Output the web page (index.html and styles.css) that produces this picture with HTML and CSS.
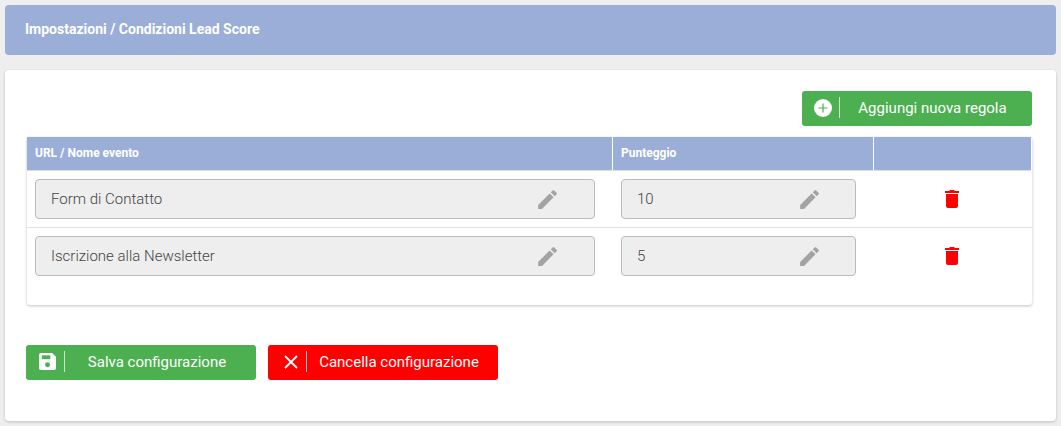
FILE: index.html
```html
<!DOCTYPE html>
<html lang="it">
<head>
  <meta charset="UTF-8" />
  <title>Condizioni Lead Score</title>
  <link rel="stylesheet" href="styles.css">
</head>
<body>

  <div class="page-title">Impostazioni / Condizioni Lead Score</div>

  <div class="card">
    <div class="toolbar">
      <button class="btn btn-green btn-add">
        <span class="btn-icon">
          <svg width="18" height="18" viewBox="0 0 18 18"><circle cx="9" cy="9" r="9" fill="#fff"/><path d="M9 4.5v9M4.5 9h9" stroke="#4caf50" stroke-width="1.2"/></svg>
        </span>
        <span class="btn-label">Aggiungi nuova regola</span>
      </button>
    </div>

    <div class="table-box">
      <div class="row row-head">
        <div class="col-name">URL / Nome evento</div>
        <div class="col-score">Punteggio</div>
        <div class="col-action"></div>
      </div>

      <div class="row">
        <div class="col-name">
          <div class="field">
            <span>Form di Contatto</span>
            <svg class="pencil" viewBox="0 0 24 24"><path d="M3 17.25V21h3.75L17.81 9.94l-3.75-3.75L3 17.25zM20.71 7.04a1 1 0 0 0 0-1.41l-2.34-2.34a1 1 0 0 0-1.41 0l-1.83 1.83 3.75 3.75 1.83-1.83z"/></svg>
          </div>
        </div>
        <div class="col-score">
          <div class="field">
            <span>10</span>
            <svg class="pencil" viewBox="0 0 24 24"><path d="M3 17.25V21h3.75L17.81 9.94l-3.75-3.75L3 17.25zM20.71 7.04a1 1 0 0 0 0-1.41l-2.34-2.34a1 1 0 0 0-1.41 0l-1.83 1.83 3.75 3.75 1.83-1.83z"/></svg>
          </div>
        </div>
        <div class="col-action">
          <svg width="14" height="18" viewBox="0 0 14 18"><path d="M5 0h4l1 1h4v2H0V1h4zM1 4h12v12a2 2 0 0 1-2 2H3a2 2 0 0 1-2-2z" fill="#f00"/></svg>
        </div>
      </div>

      <div class="row">
        <div class="col-name">
          <div class="field">
            <span>Iscrizione alla Newsletter</span>
            <svg class="pencil" viewBox="0 0 24 24"><path d="M3 17.25V21h3.75L17.81 9.94l-3.75-3.75L3 17.25zM20.71 7.04a1 1 0 0 0 0-1.41l-2.34-2.34a1 1 0 0 0-1.41 0l-1.83 1.83 3.75 3.75 1.83-1.83z"/></svg>
          </div>
        </div>
        <div class="col-score">
          <div class="field">
            <span>5</span>
            <svg class="pencil" viewBox="0 0 24 24"><path d="M3 17.25V21h3.75L17.81 9.94l-3.75-3.75L3 17.25zM20.71 7.04a1 1 0 0 0 0-1.41l-2.34-2.34a1 1 0 0 0-1.41 0l-1.83 1.83 3.75 3.75 1.83-1.83z"/></svg>
          </div>
        </div>
        <div class="col-action">
          <svg width="14" height="18" viewBox="0 0 14 18"><path d="M5 0h4l1 1h4v2H0V1h4zM1 4h12v12a2 2 0 0 1-2 2H3a2 2 0 0 1-2-2z" fill="#f00"/></svg>
        </div>
      </div>
    </div>

    <div class="actions">
      <button class="btn btn-green">
        <span class="btn-icon">
          <svg width="17" height="17" viewBox="0 0 18 18"><path d="M2 0h12l4 4v12a2 2 0 0 1-2 2H2a2 2 0 0 1-2-2V2a2 2 0 0 1 2-2z" fill="#fff"/><rect x="3" y="2.5" width="9" height="4" fill="#4caf50"/><circle cx="9" cy="12.5" r="2.6" fill="#4caf50"/></svg>
        </span>
        <span class="btn-label">Salva configurazione</span>
      </button>
      <button class="btn btn-red">
        <span class="btn-icon">
          <svg width="14" height="14" viewBox="0 0 14 14"><path d="M1 1l12 12M13 1L1 13" stroke="#fff" stroke-width="1.8"/></svg>
        </span>
        <span class="btn-label">Cancella configurazione</span>
      </button>
    </div>
  </div>

</body>
</html>
```

FILE: styles.css
```css
body {
  font-family: Roboto, sans-serif;
  background-color: #eee;
  margin: 0;
  padding: 5px;
  color: #444;
}

.page-title {
  height: 50px;
  line-height: 49px;
  padding-left: 20px;
  background-color: #9aaed8;
  border-radius: 4px;
  color: #fff;
  font-size: 14px;
  font-weight: 700;
}

.card {
  margin-top: 15px;
  height: 351px;
  padding: 21px 24px 0 21px;
  box-sizing: border-box;
  background-color: #fff;
  border-radius: 4px;
  box-shadow: 0 1px 3px rgba(0,0,0,0.2);
}

.toolbar {
  display: flex;
  justify-content: flex-end;
  margin-bottom: 11px;
}

.btn {
  display: flex;
  align-items: center;
  width: 230px;
  height: 35px;
  padding: 0 7px 2px 0;
  box-sizing: border-box;
  border: none;
  border-radius: 3px;
  color: #fff;
  font-family: inherit;
  font-size: 15px;
}

.btn-green {
  background-color: #4caf50;
}

.btn-red {
  background-color: #f00;
}

.btn-icon {
  display: flex;
  align-items: center;
  justify-content: flex-end;
  width: 39px;
  height: 21px;
  padding-right: 8px;
  box-sizing: border-box;
  border-right: 1px solid rgba(255,255,255,0.7);
  flex-shrink: 0;
}

.btn-add .btn-icon {
  width: 38px;
  padding-right: 7px;
}

.btn-label {
  flex: 1;
  text-align: center;
}

.table-box {
  height: 168px;
  margin: 0 0 0 1px;
  background-color: #fff;
  box-shadow: 0 1px 3px rgba(0,0,0,0.25);
  border-radius: 3px;
}

.row {
  display: flex;
  height: 57px;
  align-items: center;
  border-bottom: 1px solid #e0e0e0;
  box-sizing: border-box;
}

.row:last-child {
  border-bottom-color: transparent;
}

.row-head {
  height: 34px;
  margin-right: 1px;
  background-color: #9aaed8;
  color: #fff;
  font-size: 12px;
  font-weight: 700;
  align-items: stretch;
  border-bottom: 1px solid #dcdcdc;
}

.row-head > div {
  display: flex;
  align-items: center;
  padding-bottom: 2px;
}

.col-name {
  width: 586px;
  padding: 0 18px 0 8px;
  box-sizing: border-box;
}

.col-score {
  width: 261px;
  padding: 0 18px 0 8px;
  box-sizing: border-box;
}

.col-score .field {
  padding-right: 33px;
}

.row-head .col-name,
.row-head .col-score {
  border-right: 1px solid #fff;
}

.col-action {
  flex: 1;
  display: flex;
  justify-content: center;
  padding-right: 2px;
}

.field {
  display: flex;
  align-items: center;
  justify-content: space-between;
  height: 40px;
  padding: 0 34px 0 15px;
  box-sizing: border-box;
  background-color: #eee;
  border: 1px solid #bbb;
  border-radius: 4px;
  font-size: 15px;
  font-weight: 300;
}

.pencil {
  fill: #a3a3a3;
  width: 25px;
  height: 25px;
}

.actions {
  display: flex;
  gap: 12px;
  margin-top: 40px;
}
```
